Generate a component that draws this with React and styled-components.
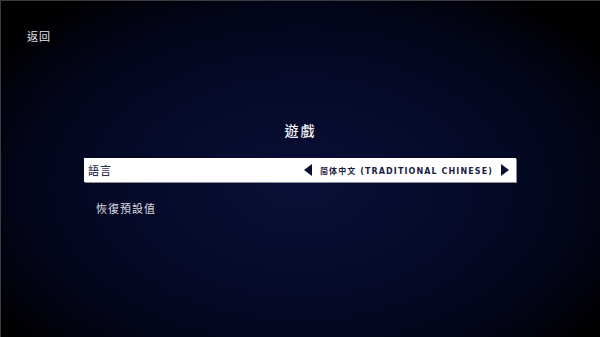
import React from 'react';
import styled, { createGlobalStyle } from 'styled-components';

const Global = createGlobalStyle`
  html, body {
    margin: 0;
    padding: 0;
    background: #000;
  }
  body {
    font-family: "Noto Sans CJK TC", "Noto Sans", sans-serif;
  }
`;

const Screen = styled.div`
  width: 600px;
  height: 337px;
  box-sizing: border-box;
  overflow: hidden;
  border-top: 1px solid #3c3c40;
  border-left: 1px solid #3c3c40;
  background: radial-gradient(ellipse 62% 70% at 50% 55%, #0a1036 0%, #060a29 45%, #03051a 75%, #000 100%);
  display: flex;
  flex-direction: column;
`;

const BackButton = styled.div`
  margin: 26px 0 0 26px;
  color: #e6e6ea;
  font-size: 11px;
  line-height: 18px;
  letter-spacing: 1px;
`;

const Title = styled.h1`
  margin: 75px 0 0;
  text-align: center;
  color: #f2f2f5;
  font-size: 14px;
  font-weight: 500;
  line-height: 20px;
  letter-spacing: 2px;
`;

const Menu = styled.div`
  margin: 18px 0 0 83px;
  width: 432px;
  display: flex;
  flex-direction: column;
  gap: 14px;
`;

const Row = styled.div`
  height: 24px;
  box-sizing: border-box;
  display: flex;
  align-items: center;
  justify-content: space-between;
  padding: 0 6px 0 4px;
  background: ${({ selected }) => (selected ? '#ffffff' : 'transparent')};
  box-shadow: ${({ selected }) => (selected ? '1px 1px 0 #8a8c98' : 'none')};
  color: ${({ selected }) => (selected ? '#2c3150' : '#dcdce2')};
  font-size: 11px;
  font-weight: ${({ selected }) => (selected ? 500 : 400)};
  letter-spacing: 1px;
`;

const Label = styled.span`
  padding-left: ${({ indent }) => indent || 0}px;
`;

const Picker = styled.div`
  display: flex;
  align-items: center;
  gap: 7px;
  color: #0b0f35;
`;

const Value = styled.span`
  font-family: "DejaVu Sans", "Noto Sans CJK TC", sans-serif;
  font-size: 8px;
  font-weight: 700;
  letter-spacing: 1.1px;
  color: #1a1e40;
`;

const Arrow = ({ dir }) => (
  <svg width="10" height="12" viewBox="0 0 10 12">
    {dir === 'left'
      ? <polygon points="9,0 9,12 1,6" fill="#0b0f35" />
      : <polygon points="1,0 1,12 9,6" fill="#0b0f35" />}
  </svg>
);

const App = () => (
  <Screen>
    <Global />
    <BackButton>返回</BackButton>
    <Title>遊戲</Title>
    <Menu>
      <Row selected>
        <Label>語言</Label>
        <Picker>
          <Arrow dir="left" />
          <Value>简体中文 (TRADITIONAL CHINESE)</Value>
          <Arrow dir="right" />
        </Picker>
      </Row>
      <Row>
        <Label indent={8}>恢復預設值</Label>
      </Row>
    </Menu>
  </Screen>
);

export default App;
